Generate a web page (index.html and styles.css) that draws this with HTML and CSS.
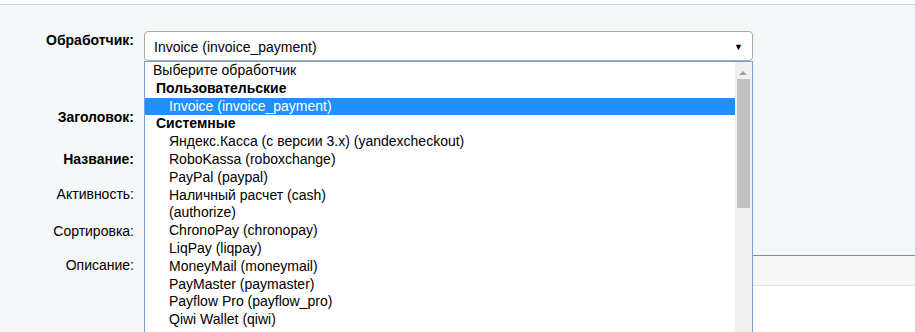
FILE: index.html
```html
<!DOCTYPE html>
<html lang="ru">
<head>
    <meta charset="UTF-8">
    <title>Платёжная система</title>
    <link rel="stylesheet" href="styles.css">
</head>
<body>
    <div class="top-strip"></div>

    <div class="edit-area">
        <div class="form-row row-handler">
            <label class="field-label bold">Обработчик:</label>
            <div class="field">
                <div class="select-box">
                    <span class="select-value">Invoice (invoice_payment)</span>
                    <span class="select-arrow">&#9660;</span>
                </div>

                <div class="select-popup">
                    <ul class="option-list">
                        <li class="opt">Выберите обработчик</li>
                        <li class="opt-group">Пользовательские</li>
                        <li class="opt sub selected">Invoice (invoice_payment)</li>
                        <li class="opt-group">Системные</li>
                        <li class="opt sub">Яндекс.Касса (с версии 3.x) (yandexcheckout)</li>
                        <li class="opt sub">RoboKassa (roboxchange)</li>
                        <li class="opt sub">PayPal (paypal)</li>
                        <li class="opt sub">Наличный расчет (cash)</li>
                        <li class="opt sub">(authorize)</li>
                        <li class="opt sub">ChronoPay (chronopay)</li>
                        <li class="opt sub">LiqPay (liqpay)</li>
                        <li class="opt sub">MoneyMail (moneymail)</li>
                        <li class="opt sub">PayMaster (paymaster)</li>
                        <li class="opt sub">Payflow Pro (payflow_pro)</li>
                        <li class="opt sub">Qiwi Wallet (qiwi)</li>
                    </ul>
                    <div class="popup-scroll">
                        <span class="scroll-up"></span>
                        <span class="scroll-thumb"></span>
                    </div>
                </div>
            </div>
        </div>

        <div class="form-row row-title">
            <label class="field-label bold">Заголовок:</label>
            <div class="field"><input type="text" class="text-input"></div>
        </div>

        <div class="form-row row-name">
            <label class="field-label bold">Название:</label>
            <div class="field"><input type="text" class="text-input"></div>
        </div>

        <div class="form-row row-active">
            <label class="field-label">Активность:</label>
            <div class="field"><input type="checkbox" checked></div>
        </div>

        <div class="form-row row-sort">
            <label class="field-label">Сортировка:</label>
            <div class="field"><input type="text" class="text-input short"></div>
        </div>

        <div class="form-row row-descr">
            <label class="field-label">Описание:</label>
            <div class="field">
                <div class="editor">
                    <div class="editor-toolbar"></div>
                    <div class="editor-body"></div>
                </div>
            </div>
        </div>
    </div>
</body>
</html>
```

FILE: styles.css
```css
* {
    margin: 0;
    padding: 0;
    box-sizing: border-box;
}

body {
    font-family: "Liberation Sans", Arial, sans-serif;
    font-size: 14px;
    color: #000;
    background: #fff;
    height: 332px;
    overflow: hidden;
}

.top-strip {
    height: 5px;
    border-bottom: 1px solid #c6ced8;
}

.edit-area {
    background: #f5f8f9;
    padding-top: 26px;
    height: 327px;
    overflow: hidden;
}

.form-row {
    display: flex;
    align-items: flex-start;
}

.field-label {
    width: 135px;
    flex-shrink: 0;
    text-align: right;
    line-height: 16px;
    padding-top: 1px;
    padding-right: 1px;
}

.field-label.bold {
    font-weight: bold;
}

.field {
    flex: 1;
    margin-left: 9px;
    position: relative;
}

.row-handler { height: 77px; }
.row-title   { height: 42px; }
.row-name    { height: 35px; }
.row-active  { height: 37px; }
.row-sort    { height: 34px; }

/* select */
.select-box {
    width: 609px;
    height: 30px;
    background: #fff;
    border: 1px solid #a9a9a9;
    border-radius: 4px;
    display: flex;
    align-items: center;
    justify-content: space-between;
    padding: 0 9px 0 9px;
}

.select-value {
    line-height: 16px;
    padding-top: 1px;
}

.select-arrow {
    font-size: 9px;
    margin-top: 1px;
}

.select-popup {
    position: absolute;
    top: 30px;
    left: 0;
    width: 609px;
    height: 271px;
    background: #fff;
    border: 1px solid #7e9ed6;
    border-bottom: none;
    display: flex;
    overflow: hidden;
    z-index: 5;
}

.option-list {
    list-style: none;
    flex: 1;
}

.opt,
.opt-group {
    height: 17.8px;
    line-height: 17.8px;
    white-space: nowrap;
}

.opt {
    padding-left: 8px;
}

.opt.sub {
    padding-left: 24px;
}

.opt-group {
    font-weight: bold;
    padding-left: 11px;
}

.opt.selected {
    background: #1e90ff;
    color: #fff;
}

.popup-scroll {
    width: 17px;
    background: #f0f0f0;
    position: relative;
}

.scroll-up {
    position: absolute;
    top: 9px;
    left: 4px;
    width: 0;
    height: 0;
    border-left: 4px solid transparent;
    border-right: 4px solid transparent;
    border-bottom: 4px solid #a3a3a3;
}

.scroll-thumb {
    position: absolute;
    top: 17px;
    left: 2px;
    width: 13px;
    height: 129px;
    background: #c1c1c1;
}

/* other fields, mostly hidden behind the popup */
.text-input {
    width: 400px;
    height: 26px;
    border: 1px solid #a9a9a9;
    background: #fff;
    margin-top: -5px;
}

.text-input.short {
    width: 60px;
}

.editor {
    margin-top: -1px;
}

.editor-toolbar {
    height: 31px;
    background: #f7f7f7;
    border-top: 1px solid #7b8fa5;
    border-bottom: 1px solid #e3e3e3;
}

.editor-body {
    height: 120px;
    background: #fff;
}
```
